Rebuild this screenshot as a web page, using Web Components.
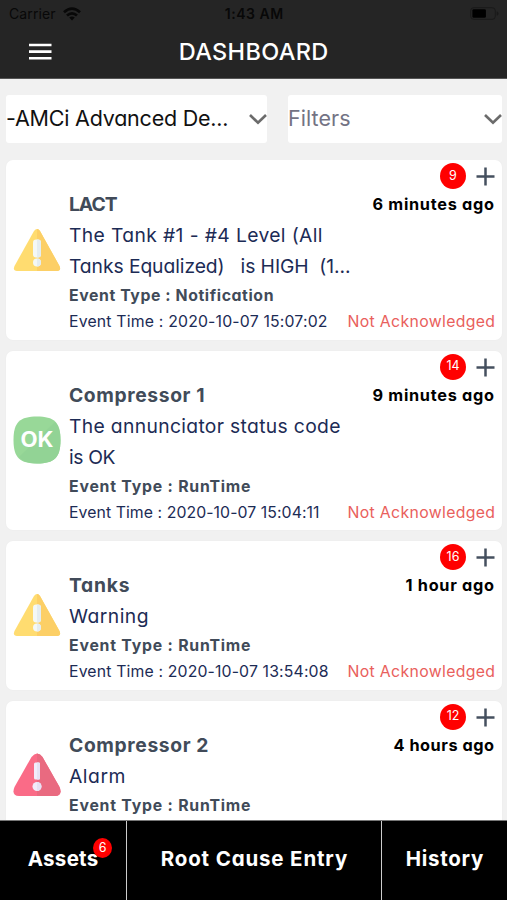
<!DOCTYPE html>
<html lang="en">
<head>
<meta charset="utf-8">
<title>Dashboard</title>
<style>
    body{
        margin: 0;
        font-family: Inter, "Open Sans", sans-serif;
        font-feature-settings: "cv11", "calt" 0;
        color: #1c2b55;
        background-color: #f1f1f1;
    }
</style>
</head>
<body>
<app-shell>
    <status-bar slot="top"></status-bar>
    <title-bar slot="top"><fit-text width="149">DASHBOARD</fit-text></title-bar>
    <select-box slot="filters" class="site"><fit-text width="222">-AMCi Advanced De...</fit-text></select-box>
    <select-box slot="filters" class="placeholder"><fit-text width="62">Filters</fit-text></select-box>

    <event-card level="warning" count="9">
        <fit-text slot="name" width="48">LACT</fit-text>
        <fit-text slot="ago" width="121">6 minutes ago</fit-text>
        <fit-text slot="message" width="253">The Tank #1 - #4 Level (All</fit-text>
        <fit-text slot="message" width="281">Tanks Equalized)   is HIGH  (1...</fit-text>
        <fit-text slot="type" width="204">Event Type : Notification</fit-text>
        <fit-text slot="time" width="258">Event Time : 2020-10-07 15:07:02</fit-text>
    </event-card>
    <event-card level="ok" count="14">
        <fit-text slot="name" width="135">Compressor 1</fit-text>
        <fit-text slot="ago" width="121">9 minutes ago</fit-text>
        <fit-text slot="message" width="271">The annunciator status code</fit-text>
        <fit-text slot="message" width="46">is OK</fit-text>
        <fit-text slot="type" width="181">Event Type : RunTime</fit-text>
        <fit-text slot="time" width="250">Event Time : 2020-10-07 15:04:11</fit-text>
    </event-card>
    <event-card level="warning" count="16">
        <fit-text slot="name" width="60">Tanks</fit-text>
        <fit-text slot="ago" width="88">1 hour ago</fit-text>
        <fit-text slot="message" width="79">Warning</fit-text>
        <fit-text slot="type" width="181">Event Type : RunTime</fit-text>
        <fit-text slot="time" width="259">Event Time : 2020-10-07 13:54:08</fit-text>
    </event-card>
    <event-card level="alarm" count="12">
        <fit-text slot="name" width="139">Compressor 2</fit-text>
        <fit-text slot="ago" width="100">4 hours ago</fit-text>
        <fit-text slot="message" width="56">Alarm</fit-text>
        <fit-text slot="type" width="181">Event Type : RunTime</fit-text>
    </event-card>

    <tab-button slot="tabs" count="6"><fit-text width="70">Assets</fit-text></tab-button>
    <tab-button slot="tabs"><fit-text width="186">Root Cause Entry</fit-text></tab-button>
    <tab-button slot="tabs"><fit-text width="77">History</fit-text></tab-button>
</app-shell>

<script>
const attach = (el, html) => {
    el.attachShadow({mode: 'open'});
    const template = document.createElement('template');
    template.innerHTML = html;
    el.shadowRoot.append(template.content.cloneNode(true));
}

// One line of text, tracked in or out to fill the given width
class FitText extends HTMLElement{
    constructor(){
        super();
        attach(this, `
            <style>
                :host{ display: block; width: max-content; white-space: pre }
                span{ display: inline-block }
            </style>
            <span><slot></slot></span>
        `.replace(/>\s+</g, '><').trim());
    }
    fit(){
        const span = this.shadowRoot.querySelector('span');
        const width = Number(this.getAttribute('width'));
        const gaps = this.textContent.length - 1;
        span.style.letterSpacing = '0';
        const space = (width + 0.5 - span.getBoundingClientRect().width) / gaps;
        span.style.letterSpacing = space + 'px';
        span.style.marginRight = -space + 'px';
    }
}

class StatusBar extends HTMLElement{
    constructor(){
        super();
        attach(this, `
            <style>
                :host{
                    display: grid;
                    grid-template-columns: 1fr auto 1fr;
                    align-items: center;
                    height: 27px;
                    padding: 0 8px 0 9px;
                    color: #080808;
                    font-size: 14px;
                    font-feature-settings: normal;
                }
                div{ display: flex; align-items: center; gap: 7px }
                b{ font-weight: 600 }
                .battery{ justify-content: flex-end }
                svg{ display: block }
            </style>
            <div>
                <fit-text width="46">Carrier</fit-text>
                <svg width="18" height="14" viewBox="0 0 18 14" fill="none" stroke="#080808" stroke-width="2.7">
                    <path d="M1 5.2Q9-2 17 5.2M4 8.6Q9 4.2 14 8.6"/>
                    <path d="M9 13.5L6.2 10.6Q9 8.5 11.8 10.6Z" fill="#080808" stroke="none"/>
                </svg>
            </div>
            <b><fit-text width="58">1:43 AM</fit-text></b>
            <div class="battery">
                <svg width="29" height="13" viewBox="0 0 29 13">
                    <rect x=".7" y=".7" width="24.6" height="11.6" rx="3" fill="none" stroke="#191919"/>
                    <rect x="2.4" y="2.2" width="13.5" height="8.6" rx="1.4" fill="#000"/>
                    <path d="M26.7 4.2v4.6q1.8-.6 1.8-2.3t-1.8-2.3" fill="#191919"/>
                </svg>
            </div>
        `);
    }
}

class TitleBar extends HTMLElement{
    constructor(){
        super();
        attach(this, `
            <style>
                :host{
                    display: grid;
                    grid-template-columns: 1fr auto 1fr;
                    align-items: center;
                    height: 52px;
                    box-sizing: border-box;
                    padding: 0 29px 3px;
                    border-bottom: 1px solid #555;
                    color: #fff;
                    font-size: 23.5px;
                    font-weight: 500;
                }
                svg{ display: block; margin-top: 1px }
            </style>
            <svg width="23" height="17" stroke="#fff" stroke-width="2.6"><path d="M0 2h22.5M0 8.6h22.5M0 15.2h22.5"/></svg>
            <slot></slot>
        `);
    }
}

class SelectBox extends HTMLElement{
    constructor(){
        super();
        attach(this, `
            <style>
                :host{
                    display: flex;
                    align-items: center;
                    justify-content: space-between;
                    box-sizing: border-box;
                    height: 48px;
                    padding: 0 0 3px;
                    border-radius: 3px;
                    background-color: #fff;
                    color: #111;
                    font-size: 21.5px;
                }
                :host(.placeholder){ color: #737384 }
                svg{ display: block; margin-top: 3px }
            </style>
            <slot></slot>
            <svg width="18" height="12" fill="none" stroke="#6b6b6b" stroke-width="2.6"><path d="M1 2l8 7.8L17 2"/></svg>
        `);
    }
}

class CountBadge extends HTMLElement{
    constructor(){
        super();
        attach(this, `
            <style>
                :host{
                    display: flex;
                    align-items: center;
                    justify-content: center;
                    width: 26px; height: 26px;
                    border-radius: 50%;
                    background-color: #f00;
                    color: #fff;
                    font-size: 12.5px;
                    font-weight: 400;
                    line-height: 1;
                }
            </style>
            <slot></slot>
        `);
    }
}

const levelIcons = {
    warning: `
        <svg width="48" height="44" viewBox="0 0 48 44">
            <path d="M21 3Q24-1 27 3L46.5 38Q48.5 43 44 43H4Q-.5 43 1.5 38Z" fill="#ffdc70"/>
            <path d="M24 .9Q26 1 27 3L46.5 38Q48.5 43 44 43H24Z" fill="#fccf66"/>
            <rect x="20" y="11.5" width="8" height="18" rx="3.2" fill="#f4f8f6"/>
            <circle cx="24" cy="34.5" r="4" fill="#f4f8f6"/>
            <path d="M24 11.5h1q3 0 3 3v12q0 3-3 3h-1zM24 30.5a4 4 0 0 1 0 8z" fill="#e4edf2"/>
        </svg>`,
    alarm: `
        <svg width="48" height="44" viewBox="0 0 48 44">
            <path d="M18.5 4Q24-3 29.5 4L46.500 34Q50 42.5 42 43H6Q-2 42.5 1.5 34Z" fill="#fa6b87"/>
            <path d="M24 .5Q27.5 .8 29.5 4L46.5 34Q50 42.5 42 43H24Z" fill="#e96a80"/>
            <rect x="21" y="9.5" width="6" height="17" rx="1.5" fill="#f2ebfa"/>
            <circle cx="24" cy="33.5" r="4.5" fill="#f2ebfa"/>
            <path d="M24 9.5h2q1 0 1 1v15q0 1-1 1h-2zM24 29a4.5 4.5 0 0 1 0 9z" fill="#e6e1f4"/>
        </svg>`,
    ok: `
        <svg width="48" height="48" viewBox="0 0 48 48">
            <path d="M24 .5C41 .5 47.5 6 47.5 24S41 47.500 24 47.5.5 42 .5 24 7 .5 24 .5Z" fill="#98d898"/>
            <path d="M6 41L42 6Q47.5 11 47.5 24C47.5 42 41 47.5 24 47.5Q11 47.5 6 41Z" fill="#92d395"/>
            <text x="24" y="31" text-anchor="middle" textLength="33" lengthAdjust="spacingAndGlyphs" font-size="21" font-weight="700" fill="#fff">OK</text>
        </svg>`
};

class EventCard extends HTMLElement{
    constructor(){
        super();
        attach(this, `
            <style>
                :host{
                    display: flex;
                    box-sizing: border-box;
                    padding-right: 8px;
                    border-radius: 7px;
                    background-color: #fff;
                    box-shadow: 0 0 2px rgba(0,0,0,0.04);
                }
                .icon{
                    display: flex;
                    align-items: center;
                    flex: none;
                    width: 56px;
                    padding-left: 7px;
                }
                .body{ flex: 1; min-width: 0; padding-bottom: 4.5px }
                .actions{
                    display: flex;
                    justify-content: flex-end;
                    gap: 10px;
                    height: 26px;
                    padding-top: 3px;
                    margin-right: -1px;
                }
                .row{ display: flex; justify-content: space-between }
                .name{ line-height: 31px; font-size: 19.3px; font-weight: 700; color: #414b59 }
                .ago{ line-height: 31px; font-size: 16.3px; font-weight: 700; color: #000 }
                .message{ line-height: 31px; font-size: 19.3px }
                .type{ line-height: 27px; font-size: 15.8px; font-weight: 700; color: #414b59 }
                .details{ line-height: 26px; min-height: 26px; font-size: 15.8px; margin-right: -1px }
                .ack{ color: #e9605c }
            </style>
            <div class="icon"></div>
            <div class="body">
                <div class="actions">
                    <count-badge></count-badge>
                    <svg width="19" height="26" stroke="#45505f" stroke-width="2.5"><path d="M.5 13.5h18M9.5 4.5v18"/></svg>
                </div>
                <div class="row">
                    <div class="name"><slot name="name"></slot></div>
                    <div class="ago"><slot name="ago"></slot></div>
                </div>
                <div class="message"><slot name="message"></slot></div>
                <div class="type"><slot name="type"></slot></div>
                <div class="row details">
                    <slot name="time"></slot>
                    <fit-text class="ack" width="147">Not Acknowledged</fit-text>
                </div>
            </div>
        `);
    }
    connectedCallback(){
        this.shadowRoot.querySelector('.icon').innerHTML = levelIcons[this.getAttribute('level')];
        this.shadowRoot.querySelector('count-badge').textContent = this.getAttribute('count');
        // no time given: leave the details row empty
        if(!this.querySelector('[slot=time]')) this.shadowRoot.querySelector('.details').replaceChildren();
    }
}

class TabButton extends HTMLElement{
    constructor(){
        super();
        attach(this, `
            <style>
                :host{
                    display: flex;
                    align-items: center;
                    justify-content: center;
                    background-color: #000;
                    color: #fff;
                    font-size: 20.5px;
                    font-weight: 700;
                }
                div{ position: relative; margin-bottom: 4px }
                count-badge{
                    position: absolute;
                    top: -8px; right: -14px;
                    width: 19px; height: 20px;
                }
            </style>
            <div><slot></slot></div>
        `);
    }
    connectedCallback(){
        if(!this.hasAttribute('count')) return;
        const badge = document.createElement('count-badge');
        badge.textContent = this.getAttribute('count');
        this.shadowRoot.querySelector('div').append(badge);
    }
}

class AppShell extends HTMLElement{
    constructor(){
        super();
        attach(this, `
            <style>
                :host{
                    display: flex;
                    flex-direction: column;
                    height: 900px;
                    overflow: hidden;
                }
                header{ flex: none; background-color: #252525 }
                .filters{
                    flex: none;
                    display: grid;
                    grid-template-columns: 261px 214px;
                    gap: 21px;
                    padding: 16px 5px 17px 6px;
                }
                main{
                    flex: 1;
                    min-height: 0;
                    overflow: hidden;
                    display: flex;
                    flex-direction: column;
                    gap: 11px;
                    padding: 0 5px 0 6px;
                }
                ::slotted(event-card){ flex: none }
                nav{
                    flex: none;
                    display: grid;
                    grid-template-columns: 126px 254px 1fr;
                    gap: 1px;
                    height: 80px;
                    box-sizing: border-box;
                    border-top: 1px solid #777;
                    background-color: #ccc;
                }
            </style>
            <header><slot name="top"></slot></header>
            <div class="filters"><slot name="filters"></slot></div>
            <main><slot></slot></main>
            <nav><slot name="tabs"></slot></nav>
        `);
    }
}

customElements.define('fit-text', FitText);
customElements.define('count-badge', CountBadge);
customElements.define('status-bar', StatusBar);
customElements.define('title-bar', TitleBar);
customElements.define('select-box', SelectBox);
customElements.define('event-card', EventCard);
customElements.define('tab-button', TabButton);
customElements.define('app-shell', AppShell);

const fitAll = root => {
    root.querySelectorAll('*').forEach(el => {
        if(el.localName === 'fit-text') el.fit();
        else if(el.shadowRoot) fitAll(el.shadowRoot);
    });
}
fitAll(document);
</script>
</body>
</html>
